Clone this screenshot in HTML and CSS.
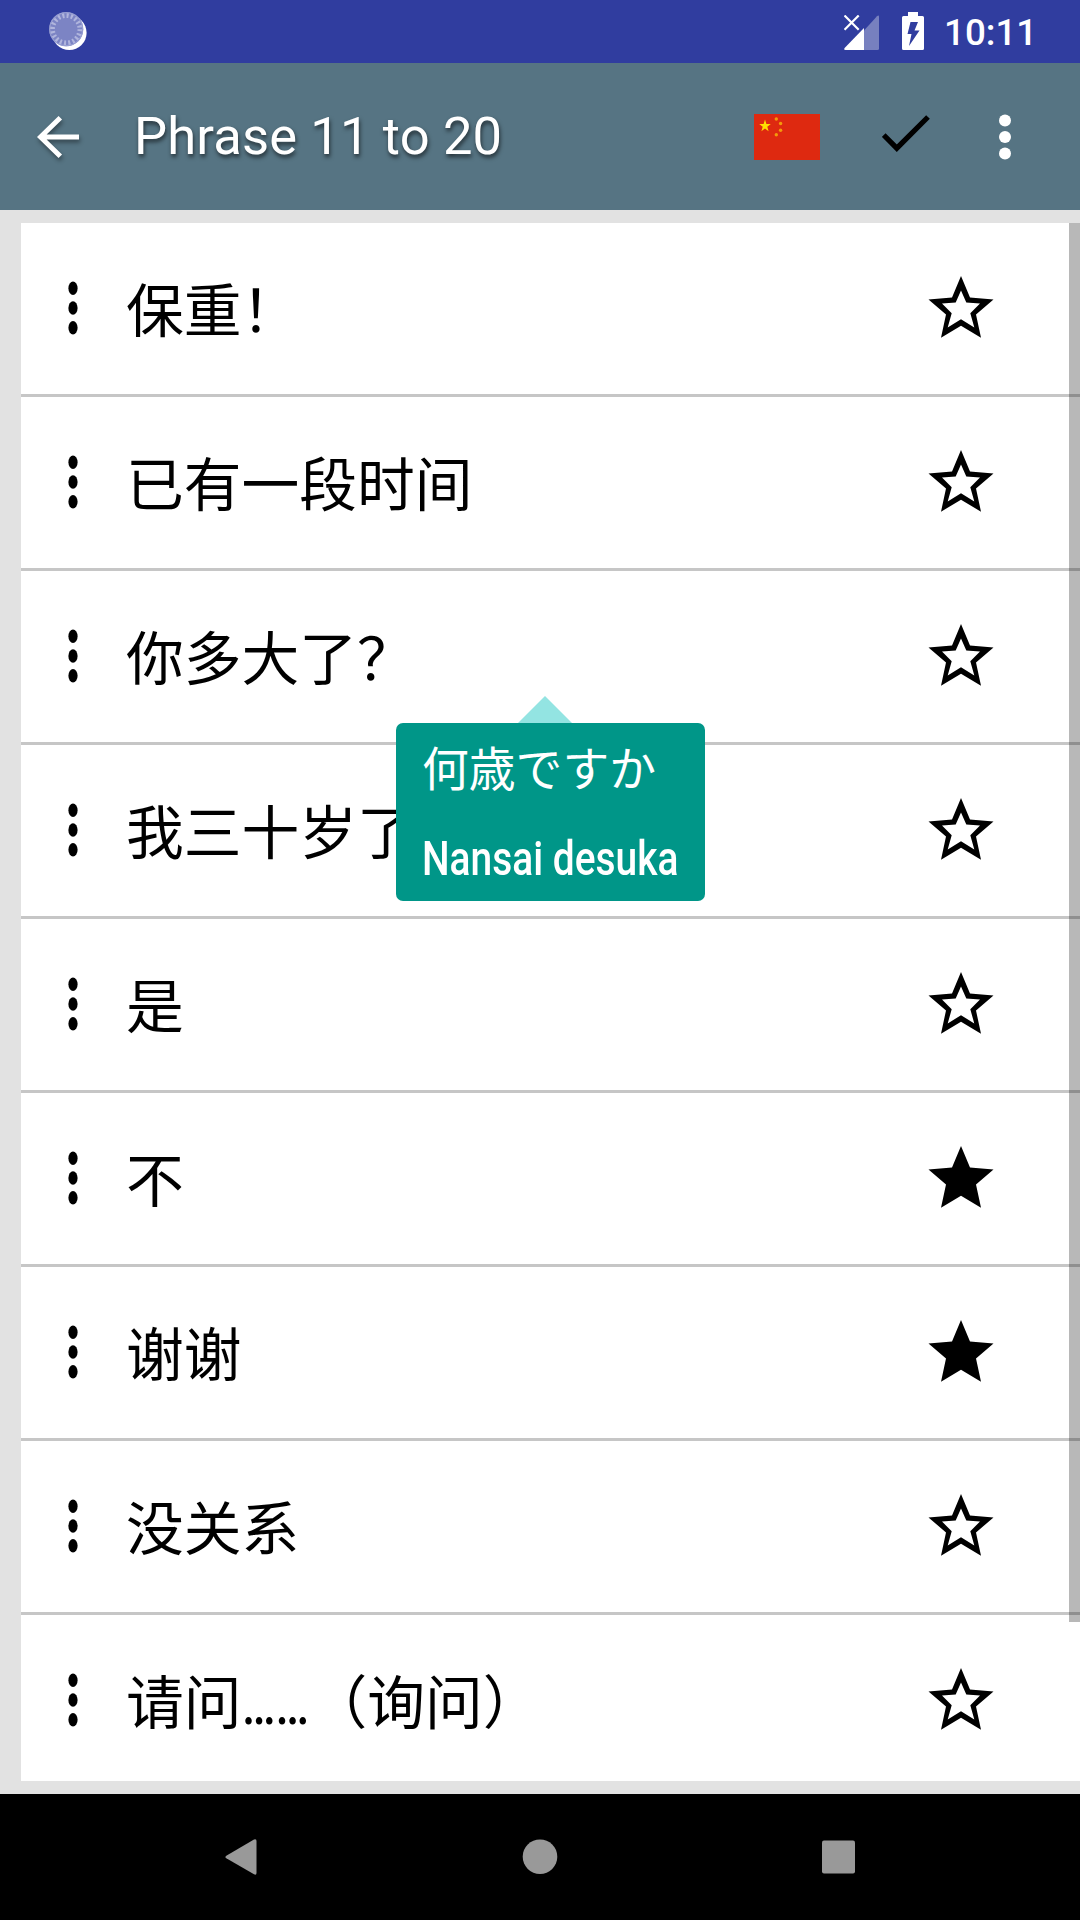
FILE: index.html
```html
<!DOCTYPE html>
<html lang="zh-CN">

<head>
    <meta charset="UTF-8">
    <meta name="viewport" content="width=device-width, initial-scale=1.0">
    <title>Phrase 11 to 20</title>
    <link rel="stylesheet" href="styles.css">
</head>
<body>
    <!-- shapes shared by the rows -->
    <svg class="defs">
        <symbol id="dots" viewBox="0 0 10 54">
            <ellipse cx="5" cy="7.2" rx="4.6" ry="6.8"/>
            <ellipse cx="5" cy="27" rx="4.6" ry="6.8"/>
            <ellipse cx="5" cy="46.8" rx="4.6" ry="6.8"/>
        </symbol>
        <symbol id="star" viewBox="0 0 66 62">
            <path fill-rule="evenodd" d="M33 0L42 21.5L65.5 23.4L48 38.5L53 61.7L33 49.7L13 61.7L18 38.5L.5 23.4L24 21.5ZM33 14.5L38.3 26.5L52 27.5L42.3 37.3L46.3 51.5L33 43.2L19.7 51.5L23.7 37.3L14 27.5L27.7 26.5Z"/>
        </symbol>
        <symbol id="star-full" viewBox="0 0 66 62">
            <path d="M33 0L42 21.5L65.5 23.4L48 38.5L53 61.7L33 49.7L13 61.7L18 38.5L.5 23.4L24 21.5Z"/>
        </symbol>
    </svg>

    <div class="status">
        <svg class="sync" width="38" height="40" viewBox="0 0 38 40">
            <circle cx="20.3" cy="20.8" r="17.3" fill="#fff"/>
            <circle cx="17.2" cy="17.2" r="17" fill="#7c84c4"/>
            <circle cx="17.2" cy="17.2" r="13.8" fill="none" stroke="#b0b5dd" stroke-width="5" stroke-dasharray="2.1 2.235"/>
            <circle cx="17.2" cy="17.2" r="16.5" fill="none" stroke="#979ed1" stroke-width="1.2"/>
        </svg>
        <svg class="signal" width="36" height="36" viewBox="0 0 36 36">
            <path d="M20 15.5L33 1.2Q35 -.3 35 2V33.5Q35 35 33.5 35H20Z" fill="#7780bf"/>
            <path d="M20 13V35H1.5Q-.6 35 .6 33Z" fill="#fff"/>
            <path d="M.5 .5L14.7 14.7M14.7 .5L.5 14.7" stroke="#fff" stroke-width="2.2"/>
        </svg>
        <svg class="battery" width="22" height="38" viewBox="0 0 22 38">
            <path fill="#fff" fill-rule="evenodd" d="M6 0H16V4H20.5Q22 4 22 5.5V36.5Q22 38 20.5 38H1.5Q0 38 0 36.5V5.5Q0 4 1.5 4H6ZM8.5 10L5.5 22H9.5L7 34L17.5 18.5H12.5L16 10Z"/>
        </svg>
        <span class="clock">10:11</span>
    </div>

    <div class="toolbar">
        <svg class="back" width="42" height="42" viewBox="0 0 42 42">
            <path d="M23.3 1.8L3.5 21L23.3 40.2M3 21H42" fill="none" stroke="#fff" stroke-width="5"/>
        </svg>
        <h1 class="title">Phrase 11 to 20</h1>
        <svg class="flag" width="66" height="46" viewBox="0 0 66 46">
            <rect width="66" height="46" fill="#de2910"/>
            <path fill="#ffde00" d="M11 5.5L12.4 10H16.8L13.3 12.7L14.6 17.3L11 14.5L7.4 17.3L8.7 12.7L5.2 10H9.6Z"/>
            <g fill="#f39a0b">
                <circle cx="22.3" cy="5" r="1.7"/>
                <circle cx="26.6" cy="9.5" r="1.7"/>
                <circle cx="26.6" cy="16.3" r="1.7"/>
                <circle cx="22.3" cy="20.8" r="1.7"/>
            </g>
        </svg>
        <svg class="check" width="48" height="38" viewBox="0 0 48 38">
            <path d="M1.7 20L14.8 33.2L46 2" fill="none" stroke="#000" stroke-width="5.2"/>
        </svg>
        <svg class="more" width="14" height="48" viewBox="0 0 14 48">
            <g fill="#fff">
                <circle cx="7" cy="7.5" r="6"/>
                <circle cx="7" cy="24" r="6"/>
                <circle cx="7" cy="40.5" r="6"/>
            </g>
        </svg>
    </div>

    <div class="content">
        <ul class="list">
            <li><svg class="dots"><use href="#dots"/></svg><span class="phrase">保重！</span><svg class="star"><use href="#star"/></svg></li>
            <li><svg class="dots"><use href="#dots"/></svg><span class="phrase">已有一段时间</span><svg class="star"><use href="#star"/></svg></li>
            <li><svg class="dots"><use href="#dots"/></svg><span class="phrase">你多大了？</span><svg class="star"><use href="#star"/></svg></li>
            <li><svg class="dots"><use href="#dots"/></svg><span class="phrase">我三十岁了</span><svg class="star"><use href="#star"/></svg></li>
            <li><svg class="dots"><use href="#dots"/></svg><span class="phrase">是</span><svg class="star"><use href="#star"/></svg></li>
            <li><svg class="dots"><use href="#dots"/></svg><span class="phrase">不</span><svg class="star"><use href="#star-full"/></svg></li>
            <li><svg class="dots"><use href="#dots"/></svg><span class="phrase">谢谢</span><svg class="star"><use href="#star-full"/></svg></li>
            <li><svg class="dots"><use href="#dots"/></svg><span class="phrase">没关系</span><svg class="star"><use href="#star"/></svg></li>
            <li><svg class="dots"><use href="#dots"/></svg><span class="phrase">请问<span class="ellipsis">……</span>（询问）</span><svg class="star"><use href="#star"/></svg></li>
        </ul>
        <div class="scrollbar"></div>
        <div class="tooltip">
            <p class="japanese" lang="ja">何歳ですか</p>
            <p class="romaji">Nansai desuka</p>
        </div>
    </div>

    <div class="navbar">
        <svg width="32" height="36" viewBox="0 0 32 36"><path d="M29 .5Q31.5 -.5 31.5 2V34Q31.5 36.5 29 35.3L1.3 19.3Q-.5 18 1.3 16.7Z" fill="#999"/></svg>
        <svg width="36" height="36" viewBox="0 0 36 36"><circle cx="18" cy="17.7" r="17.3" fill="#999"/></svg>
        <svg width="33" height="34" viewBox="0 0 33 34"><rect y=".4" width="33" height="33.2" rx="2" fill="#999"/></svg>
    </div>
</body>

</html>
```

FILE: styles.css
```css
* {
    box-sizing: border-box;
}

body {
    margin: 0;
    width: 1080px;
    height: 1920px;
    overflow: hidden;
    font-family: Roboto, "Noto Sans CJK SC", sans-serif;
    background-color: #e2e2e2;
}

svg {
    display: block;
    flex: none;
}

.defs {
    display: none;
}

.status {
    display: flex;
    align-items: flex-start;
    height: 63px;
    padding-left: 49px;
    background-color: #303d9f;
}

.sync {
    margin-top: 12px;
}

.signal {
    margin: 15px 22px 0 757px;
}

.battery {
    margin-top: 12px;
}

.clock {
    margin: 1px 0 0 20px;
    color: white;
    font-size: 36.75px;
    font-weight: 500;
    line-height: 63px;
}

.toolbar {
    display: flex;
    align-items: center;
    height: 147px;
    padding-left: 37px;
    background-color: #567483;
}

.back {
    filter: drop-shadow(1px 3px 2px rgba(0, 0, 0, 0.4));
}

.title {
    width: 619px;
    margin: -1px 0 0 55px;
    color: white;
    font-size: 52.5px;
    font-weight: 400;
    letter-spacing: 0.15px;
    text-shadow: 1px 3px 4px rgba(0, 0, 0, 0.6);
}

.flag {
    margin-left: 1px;
}

.check {
    margin: -5px 0 0 62px;
}

.more {
    margin-left: 68px;
}

.content {
    position: relative;
    height: 1584px;
    padding: 13px 0 13px 21px;
}

.list {
    height: 1558px;
    margin: 0;
    padding: 0;
    overflow: hidden;
    list-style: none;
    background-color: white;
}

.list li {
    display: flex;
    align-items: flex-start;
    height: 174px;
    border-bottom: 3px solid #c6c6c6;
}

.dots {
    width: 10px;
    height: 54px;
    margin: 58px 0 0 47px;
}

.phrase {
    width: 802px;
    margin-left: 48px;
    font-family: "Noto Sans CJK SC", sans-serif;
    font-size: 57.75px;
    line-height: 168px;
    white-space: nowrap;
}

.ellipsis {
    display: inline-block;
    width: 68px;
    font-family: Roboto, sans-serif;
    font-weight: 500;
    transform: scaleX(0.82);
    transform-origin: left;
}

.star {
    width: 66px;
    height: 62px;
    margin-top: 53px;
}

.scrollbar {
    position: absolute;
    top: 13px;
    right: 0;
    width: 11px;
    height: 1399px;
    background-color: rgba(0, 0, 0, 0.28);
}

/* translation bubble over the list */
.tooltip {
    position: absolute;
    top: 513px;
    left: 396px;
    width: 309px;
    height: 178px;
    padding: 9px 26px;
    border-radius: 7px;
    color: white;
    background-color: #009688;
}

.tooltip::before {
    content: "";
    position: absolute;
    top: -27px;
    left: 122px;
    border: 27px solid transparent;
    border-top: 0;
    border-bottom-color: #93e4e2;
}

.tooltip p {
    margin: 0;
    font-size: 47.25px;
    white-space: nowrap;
}

.tooltip .japanese {
    font-family: "Noto Sans CJK JP", sans-serif;
    font-size: 46.8px;
    line-height: 68px;
}

.tooltip .romaji {
    margin-top: 31px;
    font-weight: 500;
    line-height: 56px;
    transform: scaleX(0.823);
    transform-origin: left;
}

.navbar {
    display: flex;
    align-items: center;
    height: 126px;
    padding-left: 225px;
    gap: 264.5px;
    background-color: black;
}
```
